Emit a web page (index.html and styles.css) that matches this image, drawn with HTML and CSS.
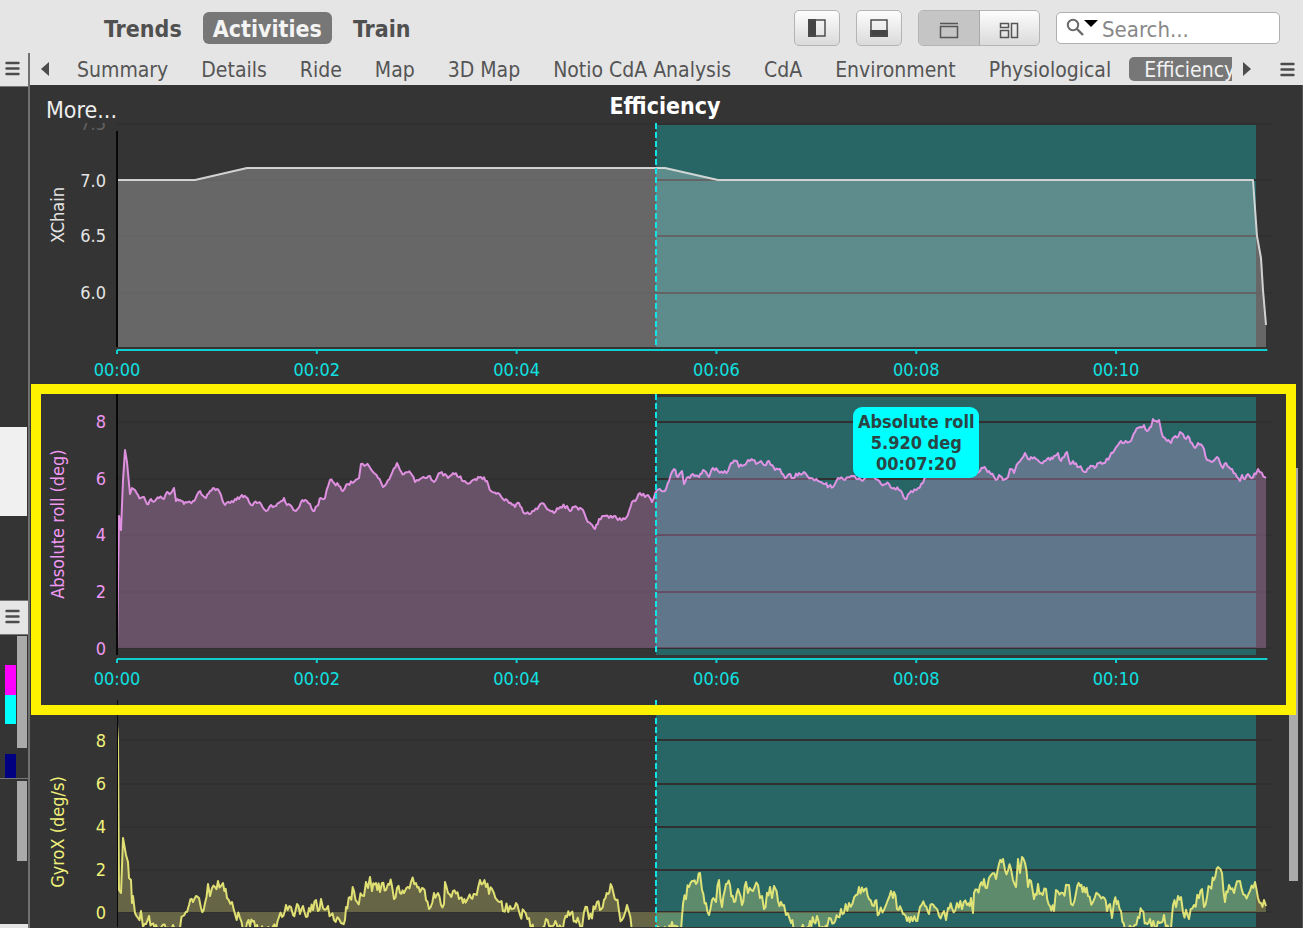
FILE: index.html
```html
<!DOCTYPE html>
<html lang="en">
<head>
<meta charset="utf-8">
<title>Efficiency</title>
<link rel="stylesheet" href="styles.css">
</head>
<body>
<div class="app">
  <header class="toolbar">
    <nav class="views">
      <button class="view">Trends</button>
      <button class="view view-active">Activities</button>
      <button class="view">Train</button>
    </nav>
    <div class="tools">
      <button class="tool" aria-label="Toggle sidebar">
        <svg width="18" height="18" viewBox="0 0 18 18"><path d="M0 0h8v18H0z" fill="#444"/><rect x="1" y="1" width="16" height="16" fill="none" stroke="#4c4c4c" stroke-width="1.5"/></svg>
      </button>
      <button class="tool" aria-label="Toggle lower pane">
        <svg width="18" height="18" viewBox="0 0 18 18"><path d="M0 11h18v7H0z" fill="#444"/><rect x="1" y="1" width="16" height="16" fill="none" stroke="#4c4c4c" stroke-width="1.5"/></svg>
      </button>
      <div class="segmented">
        <button class="segment segment-on" aria-label="Single view">
          <svg width="20" height="17" viewBox="0 0 20 17" fill="none" stroke="#555" stroke-width="1.5"><path d="M1 1.5h18"/><rect x="1.5" y="4.500" width="17" height="11"/></svg>
        </button>
        <button class="segment" aria-label="Tiled view">
          <svg width="20" height="17" viewBox="0 0 20 17" fill="none" stroke="#555" stroke-width="1.5"><rect x="1.5" y="1.5" width="8" height="4"/><rect x="1.5" y="8.5" width="8" height="7"/><rect x="12.5" y="1.5" width="6" height="14"/></svg>
        </button>
      </div>
      <label class="search">
        <svg width="33" height="20" viewBox="0 0 33 20"><circle cx="7" cy="7" r="5.2" fill="none" stroke="#6a6a6a" stroke-width="2"/><path d="M11 11l6 6" stroke="#6a6a6a" stroke-width="2.4"/><path d="M18 2h14l-7 7z" fill="#000"/></svg>
        <input class="search-input" type="text" placeholder="Search..." aria-label="Search">
      </label>
    </div>
  </header>

  <div class="body">
    <aside class="side">
      <div class="side-head side-head-top"><button class="menu" aria-label="Sidebar menu"><svg width="15" height="15" viewBox="0 0 15 15" stroke="#4c4c4c" stroke-width="2.4" stroke-linecap="round"><path d="M1.5 2h12M1.5 7.500h12M1.500 13h12"/></svg></button></div>
      <div class="side-list"><div class="side-selected"></div></div>
      <div class="side-head"><button class="menu" aria-label="Calendar menu"><svg width="15" height="15" viewBox="0 0 15 15" stroke="#4c4c4c" stroke-width="2.4" stroke-linecap="round"><path d="M1.5 2h12M1.5 7.500h12M1.500 13h12"/></svg></button></div>
      <div class="side-calendar">
        <div class="swatches"><i class="swatch magenta"></i><i class="swatch cyan"></i><i class="swatch navy"></i></div>
        <div class="thumb thumb-calendar"></div>
      </div>
      <div class="side-filters"><div class="thumb thumb-filters"></div></div>
      <div class="side-foot"></div>
    </aside>

    <main class="main">
      <div class="tabbar">
        <button class="arrow" aria-label="Scroll left"><svg width="8" height="14" viewBox="0 0 8 14"><path d="M8 0v14L0 7z" fill="#4c4c4c"/></svg></button>
        <nav class="tabs">
          <button class="tab">Summary</button>
          <button class="tab">Details</button>
          <button class="tab">Ride</button>
          <button class="tab">Map</button>
          <button class="tab">3D Map</button>
          <button class="tab">Notio CdA Analysis</button>
          <button class="tab">CdA</button>
          <button class="tab">Environment</button>
          <button class="tab">Physiological</button>
          <button class="tab tab-active">Efficiency</button>
        </nav>
        <button class="arrow" aria-label="Scroll right"><svg width="8" height="14" viewBox="0 0 8 14"><path d="M0 0v14l8-7z" fill="#4c4c4c"/></svg></button>
        <button class="menu menu-right" aria-label="Chart menu"><svg width="15" height="15" viewBox="0 0 15 15" stroke="#4c4c4c" stroke-width="2.4" stroke-linecap="round"><path d="M1.5 2h12M1.5 7.500h12M1.500 13h12"/></svg></button>
      </div>

      <section class="panel">
        <div class="panel-head">
          <button class="more">More...</button>
          <h1 class="title">Efficiency</h1>
        </div>

        <figure class="chart chain">
          <div class="chart-row chart-row-1">
            <svg class="y-axis" viewBox="30 123 87 226">
              <text class="name" transform="translate(64 215) rotate(-90)">XChain</text>
              <text class="tick faded" x="106" y="130">7.5</text>
              <text class="tick" x="106" y="187">7.0</text>
              <text class="tick" x="106" y="242">6.5</text>
              <text class="tick" x="106" y="299">6.0</text>
            </svg>
            <svg class="plot" data-series="chain" data-base="347" viewBox="117 123 1155 226" preserveAspectRatio="none">
              <rect class="selection" x="656" y="124" width="600" height="223"/>
              <path class="grid" d="M117 124h1155M117 180h1155M117 236h1155M117 293h1155"/>
              <path class="area"/><path class="line"/>
              <path class="axis" d="M117 131v216"/>
              <path class="marker" d="M656 123v224"/>
            </svg>
          </div>
          <svg class="x-axis x-axis-1"></svg>
        </figure>

        <figure class="chart roll highlighted">
          <div class="chart-row chart-row-2">
            <svg class="y-axis" viewBox="30 394 87 264">
              <text class="name" transform="translate(64 524) rotate(-90)">Absolute roll (deg)</text>
              <text class="tick" x="106" y="428">8</text>
              <text class="tick" x="106" y="485">6</text>
              <text class="tick" x="106" y="541">4</text>
              <text class="tick" x="106" y="598">2</text>
              <text class="tick" x="106" y="655">0</text>
            </svg>
            <svg class="plot" data-series="roll" data-base="648" viewBox="117 394 1155 264" preserveAspectRatio="none">
              <rect class="selection" x="656" y="397" width="600" height="258"/>
              <path class="grid" d="M117 422h1155M117 479h1155M117 535h1155M117 592h1155M117 648h1155"/>
              <path class="area"/><path class="line"/>
              <path class="axis" d="M117 394v261"/>
              <path class="marker" d="M656 394v261"/>
            </svg>
            <div class="tip-layer"><div class="tip">Absolute roll<br>5.920 deg<br>00:07:20</div></div>
          </div>
          <svg class="x-axis x-axis-2"></svg>
        </figure>

        <figure class="chart gyro">
          <div class="chart-row chart-row-3">
            <svg class="y-axis" viewBox="30 700 87 228">
              <text class="name" transform="translate(64 832) rotate(-90)">GyroX (deg/s)</text>
              <text class="tick" x="106" y="747">8</text>
              <text class="tick" x="106" y="790">6</text>
              <text class="tick" x="106" y="833">4</text>
              <text class="tick" x="106" y="876">2</text>
              <text class="tick" x="106" y="919">0</text>
            </svg>
            <svg class="plot plot-clipped" data-series="gyro" data-base="912" viewBox="117 700 1155 227" preserveAspectRatio="none">
              <rect class="selection" x="656" y="706" width="600" height="222"/>
              <path class="grid" d="M117 740h1155M117 784h1155M117 827h1155M117 870h1155M117 912h1155"/>
              <path class="area"/><path class="line"/>
              <path class="axis" d="M117 700v228"/>
              <path class="marker" d="M656 700v228"/>
            </svg>
          </div>
        </figure>
        <div class="scroll-thumb"></div>
      </section>
    </main>
  </div>
</div>
<script src="charts.js"></script>
</body>
</html>
```
FILE: styles.css
```css
* { box-sizing: border-box; }
body {
  margin: 0;
  font-family: "DejaVu Sans Condensed", "Noto Sans", sans-serif;
  background: #343434;
}
button {
  margin: 0;
  padding: 0;
  border: 0;
  background: none;
  font: inherit;
  color: inherit;
}
svg { display: block; flex: none; }
.app {
  display: flex;
  flex-direction: column;
  height: 100vh;
  overflow: hidden;
}

/* toolbar */
.toolbar {
  flex: none;
  display: flex;
  justify-content: space-between;
  align-items: center;
  height: 53px;
  padding: 3px 23px 0 94px;
  background: #e5e5e5;
}
.views { display: flex; gap: 11px; }
.view {
  height: 32px;
  padding: 0 10px;
  border-radius: 6px;
  font-size: 23px;
  line-height: 34px;
  font-weight: bold;
  color: #505050;
}
.view-active { background: #777; color: #f4f4f4; }
.tools { display: flex; align-items: center; gap: 16px; }
.tool, .segmented {
  display: flex;
  align-items: center;
  justify-content: center;
  height: 36px;
  border: 1px solid #b4b4b4;
  border-radius: 5px;
  background: linear-gradient(#fdfdfd, #dadada);
}
.tool { width: 46px; }
.segmented { width: 122px; align-items: stretch; overflow: hidden; }
.segment {
  flex: 1;
  display: flex;
  align-items: center;
  justify-content: center;
  padding-top: 5px;
}
.segment-on { background: #c5c5c5; border-right: 1px solid #aaa; }
.search {
  display: flex;
  align-items: center;
  width: 224px;
  height: 32px;
  padding-left: 9px;
  border: 1px solid #b0b0b0;
  border-radius: 5px;
  background: #fff;
}
.search-input {
  flex: 1;
  min-width: 0;
  padding: 2px 0 0 3px;
  border: 0;
  outline: 0;
  background: none;
  font: 22px "DejaVu Sans Condensed", "Noto Sans", sans-serif;
}
.search-input::placeholder { color: #888; }

/* sidebar */
.body { flex: 1; display: flex; min-height: 0; }
.side {
  flex: none;
  display: flex;
  flex-direction: column;
  width: 30px;
  border-right: 2px solid #707070;
}
.side-head {
  flex: none;
  height: 35px;
  display: flex;
  align-items: center;
  padding: 0 0 2px 5px;
  border-top: 1px solid #777;
  border-bottom: 1px solid #777;
  background: #e5e5e5;
}
.side-head-top { height: 34px; border-top: 0; }
.side-list { flex: 1; display: flex; align-items: flex-end; padding-bottom: 84px; }
.side-selected { width: 27px; height: 89px; background: #f0f0f0; }
.side-calendar {
  display: flex;
  justify-content: space-between;
  height: 144px;
  padding: 1px 1px 0 5px;
  border-bottom: 1px solid #777;
}
.swatches { display: flex; flex-direction: column; padding-top: 29px; }
.swatch { width: 11px; height: 30px; }
.magenta { background: #f0f; }
.cyan { background: #0ff; }
.navy { margin-top: 30px; height: 24px; background: #000080; }
.thumb { width: 10px; background: #aaa; }
.thumb-calendar { height: 112px; }
.side-filters { display: flex; justify-content: flex-end; height: 145px; padding: 2px 1px 0 0; }
.thumb-filters { height: 80px; }
.side-foot { height: 4px; background: #e5e5e5; }

/* tab bar */
.main { flex: 1; display: flex; flex-direction: column; min-width: 0; }
.tabbar {
  flex: none;
  display: flex;
  align-items: center;
  height: 32px;
  padding: 0 8px 0 11px;
  background: #e5e5e5;
}
.tabs {
  flex: 1;
  display: flex;
  gap: 3px;
  min-width: 0;
  margin: 0 11px 0 13px;
  overflow: hidden;
}
.tab {
  flex: none;
  height: 24px;
  padding: 0 15px;
  border-radius: 5px;
  font-size: 21px;
  line-height: 26px;
  color: #555;
}
.tab-active { background: #777; color: #f2f2f2; }
.menu-right { margin-left: 29px; }

/* charts */
.panel {
  flex: 1;
  position: relative;
  min-height: 0;
  overflow: hidden;
  background: #343434;
  border-right: 1px solid #555;
}
.panel-head {
  display: grid;
  grid-template-columns: 1fr auto 1fr;
  align-items: start;
  height: 38px;
  padding: 7px 18px 0 16px;
  color: #fff;
}
.more { justify-self: start; padding-top: 5px; font-size: 23px; line-height: 26px; color: #eee; }
.title { margin: 0; font-size: 23px; line-height: 28px; }
.chart { position: relative; margin: 0; }
.chart-row { position: relative; display: flex; padding-right: 30px; }
.chart-row-1 { height: 226px; }
.chart-row-2 { height: 264px; }
.chart-row-3 { height: 228px; }
.y-axis { width: 87px; height: 100%; }
.plot { flex: 1; min-width: 0; height: 100%; overflow: visible; }
.plot-clipped { height: 227px; overflow: hidden; }
.chain { --tone: #e4e4e4; --wash: #fff; --alpha: 0.25; }
.roll { --tone: #ee98f0; --wash: #f0a0ec; --alpha: 0.28; }
.gyro { --tone: #f0f07a; --wash: #f0f07a; --alpha: 0.27; }
.name, .tick { fill: var(--tone); font-size: 18px; }
.name { text-anchor: middle; }
.tick { text-anchor: end; }
.faded { opacity: 0.25; }
.selection { fill: #286666; }
.grid { stroke: #303030; stroke-width: 2; fill: none; }
.axis { stroke: #080808; stroke-width: 2; }
.area { fill: var(--wash); fill-opacity: var(--alpha); }
.line {
  fill: none;
  stroke: var(--tone);
  stroke-width: 2;
  stroke-linejoin: round;
  stroke-opacity: 0.9;
}
.chain .line { stroke: #e0e0e0; }
.marker { stroke: #10e4e4; stroke-width: 2; stroke-dasharray: 6 3; }
.x-axis {
  width: calc(100% - 117px);
  margin-left: 87px;
  overflow: visible;
  fill: #10e0e0;
  stroke: none;
  font-size: 18px;
  text-anchor: middle;
}
.x-axis line { stroke: #12cfcf; stroke-width: 2; }
.x-axis-1 { height: 45px; }
.x-axis-2 { height: 42px; }
.tip-layer { position: absolute; inset: 0 30px 0 87px; }
.tip {
  position: absolute;
  left: 69.2%;
  top: 13px;
  transform: translateX(-50%);
  width: 126px;
  padding: 4px 0;
  border-radius: 9px;
  background: #0ff;
  color: #2b4444;
  font-size: 18px;
  line-height: 21px;
  font-weight: bold;
  text-align: center;
  white-space: nowrap;
}
.highlighted::after {
  content: "";
  position: absolute;
  z-index: 2;
  inset: -10px 6px -15px 1px;
  border: 10px solid #fff200;
  pointer-events: none;
}
.scroll-thumb {
  position: absolute;
  right: 4px;
  top: 383px;
  width: 9px;
  height: 413px;
  background: #aaa;
}
```
FILE: charts.js
```js
const series = {
  chain: "117,180 195,180 247,168 665,168 718,180 1253,180 1257,236 1261,258 1263,290 1266,325",
  roll: "117,648 119,516 121,530 123,480 125,450 127,462 130,494 132,488 135,490 138,495 141,498 144,497 147,504 151,499 155,501 159,498 164,499 167,492 171,493 174,488 176,501 180,500 184,504 188,502 193,501 197,495 200,491 206,498 210,491 213,488 217,489 221,495 225,505 230,503 235,499 239,499 242,495 246,497 251,505 257,503 261,504 266,511 271,505 276,506 280,502 284,498 287,505 292,507 296,511 301,502 305,500 310,504 313,511 317,506 321,498 325,498 330,480 334,483 339,486 343,491 348,484 354,482 359,478 361,464 366,465 369,466 374,473 378,478 383,487 388,480 392,473 397,463 400,470 404,474 408,472 412,475 415,482 420,479 425,478 430,476 434,482 440,473 445,474 448,478 453,473 459,477 465,481 470,483 475,479 481,477 487,481 491,491 498,493 503,499 509,503 515,507 519,503 523,512 529,514 534,511 539,506 544,504 549,510 554,513 560,507 567,506 570,511 574,507 583,510 586,518 591,524 595,529 599,519 604,516 609,518 614,516 618,520 625,519 629,511 632,502 637,498 640,493 645,497 648,495 652,502 657,490 660,489 665,491 669,481 671,474 674,469 678,477 682,471 684,484 688,477 693,474 699,477 703,470 709,477 713,468 718,471 723,473 728,471 731,463 737,461 739,467 744,465 748,460 753,460 756,464 761,461 766,465 769,461 775,470 780,469 785,478 789,474 793,478 799,473 804,472 811,478 818,481 825,484 829,486 833,487 838,478 845,480 853,476 861,480 870,476 878,480 881,484 889,484 894,488 899,490 905,499 911,491 918,488 923,483 926,477 935,474 950,474 965,470 980,471 983,468 989,471 996,480 999,475 1003,480 1008,477 1010,469 1014,473 1018,463 1025,453 1028,459 1031,457 1036,459 1041,463 1044,461 1047,459 1050,460 1054,456 1058,453 1061,461 1067,452 1070,464 1073,461 1079,467 1086,472 1092,466 1096,467 1099,463 1105,463 1110,456 1114,451 1121,441 1124,443 1131,441 1135,432 1140,427 1144,425 1147,431 1151,427 1153,419 1157,422 1159,420 1163,437 1167,441 1171,443 1174,437 1178,437 1180,432 1186,439 1188,436 1192,443 1195,448 1198,443 1204,449 1207,460 1212,462 1217,457 1220,463 1223,468 1226,463 1232,469 1237,477 1240,481 1242,475 1245,479 1248,474 1251,478 1256,474 1258,469 1262,473 1266,478",
  gyro: "117,724 118,740 119,890 121,893 123,838 126,855 128,862 129,878 131,880 132,903 133,896 135,913 138,918 141,911 143,927 146,924 149,916 152,924 156,925 158,930 171,930 173,925 175,930 180,928 183,916 187,912 189,905 193,902 196,896 199,898 201,908 205,903 208,884 210,896 212,888 215,887 218,881 221,886 223,883 227,898 232,902 235,914 240,918 243,930 247,923 250,927 254,921 257,925 259,932 276,930 279,917 282,917 286,905 291,907 293,915 297,904 300,914 303,906 306,917 309,908 313,910 316,900 318,911 321,899 323,908 328,906 331,915 334,920 339,919 341,923 345,920 346,907 350,897 354,891 357,902 364,896 366,882 368,888 370,877 372,891 376,883 380,892 382,883 386,890 388,884 392,886 394,899 397,888 400,893 404,893 408,887 411,882 416,883 420,892 422,888 426,900 429,909 434,893 438,893 441,905 444,904 445,882 448,893 453,891 459,899 463,903 467,900 471,898 475,894 480,880 486,887 492,889 497,900 500,902 503,911 510,906 516,903 520,915 524,911 529,918 531,930 541,930 546,919 549,926 554,925 558,930 563,928 567,917 571,913 575,921 579,922 582,928 584,912 587,907 589,919 595,909 597,902 600,910 604,900 608,894 612,887 616,900 619,911 622,920 627,905 629,912 632,932 668,932 672,922 676,926 681,930 683,904 689,887 692,881 696,884 700,873 702,890 706,903 709,915 712,900 716,902 719,880 722,907 726,884 730,885 734,902 738,889 742,905 746,882 748,893 753,891 758,885 760,898 762,896 764,909 770,887 772,898 774,886 778,901 784,905 786,915 791,923 795,931 806,930 810,921 814,922 817,916 820,930 824,930 829,918 834,923 838,917 841,909 844,913 849,903 856,895 859,887 865,889 869,899 874,906 875,901 879,914 886,905 891,891 893,898 894,892 897,909 903,914 907,921 911,917 916,921 920,907 925,906 929,914 932,904 936,908 939,916 944,911 946,920 948,908 952,908 957,903 962,909 967,905 971,898 973,913 974,893 980,885 984,879 987,888 989,878 996,879 999,864 1003,859 1005,870 1011,869 1013,880 1016,887 1018,859 1020,873 1022,857 1025,863 1028,887 1031,881 1034,899 1038,884 1041,893 1046,889 1050,906 1054,911 1056,890 1063,893 1069,885 1071,904 1076,893 1080,886 1084,887 1088,896 1093,902 1098,894 1103,897 1107,911 1110,904 1112,918 1114,902 1118,901 1121,911 1125,930 1133,928 1138,917 1142,911 1146,923 1150,919 1155,928 1164,915 1166,928 1171,928 1173,905 1176,907 1178,896 1181,897 1183,912 1189,919 1194,905 1199,898 1202,889 1204,907 1210,887 1214,880 1218,867 1222,873 1225,902 1229,885 1234,893 1240,881 1245,895 1250,891 1255,882 1258,898 1261,903 1264,900 1266,906"
};

// Extra samples between the stored points, with a repeatable wobble.
const wobble = { chain: 0, roll: 4, gyro: 12 };

function densify(points, amount) {
  const out = [];
  let seed = 7;
  points.forEach(([x, y], i) => {
    out.push([x, y]);
    const next = points[i + 1];
    if (!amount || !next || x < 135) return;
    const steps = Math.round((next[0] - x) / 1.6);
    for (let s = 1; s < steps; s++) {
      seed = (seed * 73 + 41) % 1009;
      const sway = (seed / 1009 - 0.5) * amount;
      const t = s / steps;
      out.push([x + (next[0] - x) * t, y + (next[1] - y) * t + sway]);
    }
  });
  return out;
}

document.querySelectorAll(".plot").forEach((plot) => {
  const name = plot.dataset.series;
  const base = plot.dataset.base;
  const raw = series[name].split(" ").map((p) => p.split(",").map(Number));
  const line = densify(raw, wobble[name]).map((p) => p.join(" ")).join("L");
  plot.querySelector(".line").setAttribute("d", "M" + line);
  plot.querySelector(".area").setAttribute("d", `M117 ${base}L${line}L1266 ${base}Z`);
});

const minutes = ["00:00", "00:02", "00:04", "00:06", "00:08", "00:10"];
document.querySelectorAll(".x-axis").forEach((axis) => {
  let marks = '<line x1="0" x2="99.6%" y1="1" y2="1"/>';
  minutes.forEach((label, i) => {
    const x = i * 17.3 + "%";
    marks += `<line x1="${x}" x2="${x}" y1="1" y2="5"/><text x="${x}" y="27">${label}</text>`;
  });
  axis.innerHTML = marks;
});
```
